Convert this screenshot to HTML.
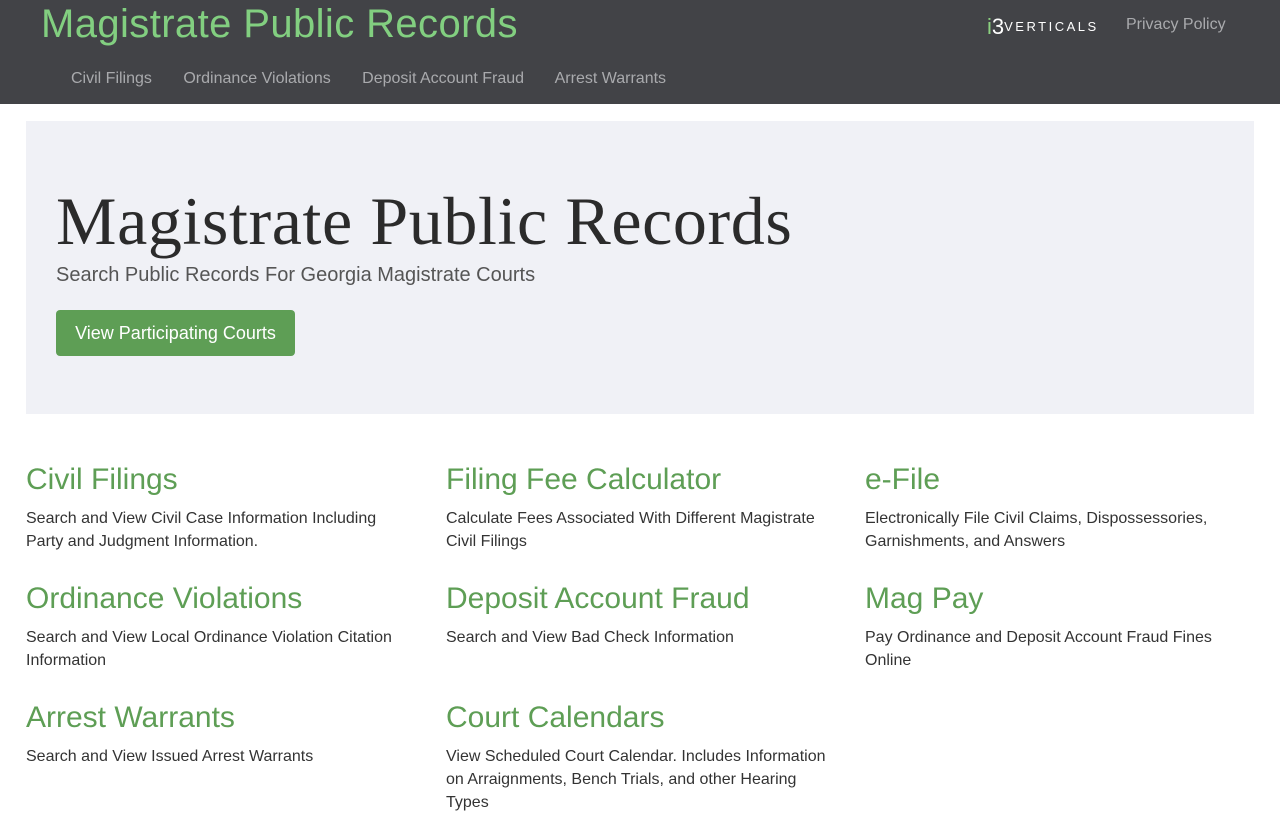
<!DOCTYPE html>
<html><head><meta charset="utf-8"><style>
*{margin:0;padding:0;box-sizing:border-box}
body{width:1280px;height:800px;overflow:hidden;background:#fff;font-family:"Liberation Sans",sans-serif;color:#333}
.hdr{height:104px;background:#424347;position:relative}
.title{position:absolute;left:41px;top:2px;font-size:40px;color:#82cf80;font-weight:300;letter-spacing:0.4px}
.nav{position:absolute;top:70px;left:71px;font-size:16px;color:#a9aaad}
.nav span{margin-right:27px}
.logo{position:absolute;left:987px;top:14px;color:#fff;font-size:13px;letter-spacing:2.5px}
.logo b{font-size:22px;font-weight:400;letter-spacing:0;vertical-align:-3px}
.pp{position:absolute;left:1126px;top:16px;font-size:16px;color:#a9aaad}
.jumbo{position:absolute;left:26px;top:121px;width:1228px;height:293px;background:#f0f1f6}
.jumbo h1{position:absolute;left:30px;top:61px;font-family:"Liberation Serif",serif;font-weight:400;font-size:68px;color:#2b2b2b;letter-spacing:0.6px}
.jumbo p{position:absolute;left:30px;top:143px;font-size:20px;color:#555;font-weight:300}
.btn{position:absolute;left:30px;top:189px;width:239px;height:46px;background:#5e9e55;border-radius:4px;color:#fff;font-size:18px;line-height:46px;text-align:center}
.c{position:absolute;width:390px}
.c h2{font-weight:400;font-size:30px;color:#5e9e55;line-height:36px}
.c p{font-size:16px;line-height:23px;color:#333;margin-top:9px}
</style></head><body>
<div class="hdr">
<div class="title">Magistrate Public Records</div>
<div class="nav"><span>Civil Filings</span> <span>Ordinance Violations</span> <span>Deposit Account Fraud</span> <span>Arrest Warrants</span></div>
<div class="logo"><b><span style="color:#8bd07f">i</span>3</b>VERTICALS</div>
<div class="pp">Privacy Policy</div>
</div>
<div class="jumbo"><h1>Magistrate Public Records</h1><p>Search Public Records For Georgia Magistrate Courts</p><div class="btn">View Participating Courts</div></div>
<div class="c" style="left:26px;top:462px"><h2>Civil Filings</h2><p>Search and View Civil Case Information Including Party and Judgment Information.</p></div>
<div class="c" style="left:446px;top:462px"><h2>Filing Fee Calculator</h2><p>Calculate Fees Associated With Different Magistrate Civil Filings</p></div>
<div class="c" style="left:865px;top:462px"><h2>e-File</h2><p>Electronically File Civil Claims, Dispossessories, Garnishments, and Answers</p></div>
<div class="c" style="left:26px;top:581px"><h2>Ordinance Violations</h2><p>Search and View Local Ordinance Violation Citation Information</p></div>
<div class="c" style="left:446px;top:581px"><h2>Deposit Account Fraud</h2><p>Search and View Bad Check Information</p></div>
<div class="c" style="left:865px;top:581px"><h2>Mag Pay</h2><p>Pay Ordinance and Deposit Account Fraud Fines Online</p></div>
<div class="c" style="left:26px;top:700px"><h2>Arrest Warrants</h2><p>Search and View Issued Arrest Warrants</p></div>
<div class="c" style="left:446px;top:700px"><h2>Court Calendars</h2><p>View Scheduled Court Calendar. Includes Information on Arraignments, Bench Trials, and other Hearing Types</p></div>
</body></html>
